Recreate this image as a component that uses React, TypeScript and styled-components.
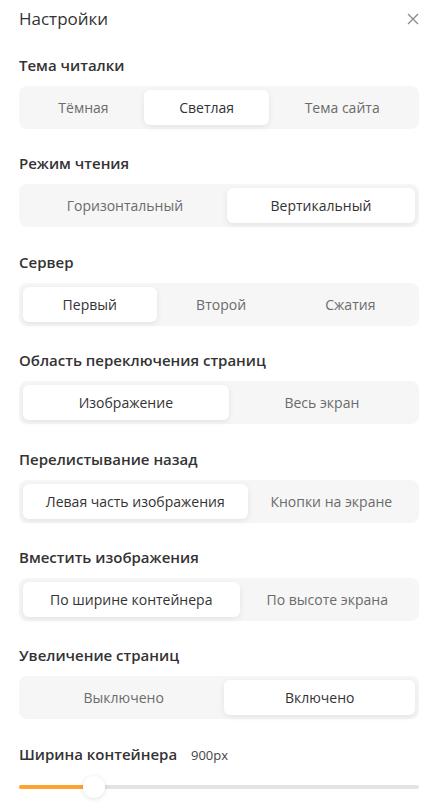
import React, { useState } from 'react';
import styled, { createGlobalStyle } from 'styled-components';

const GlobalStyle = createGlobalStyle`
  html, body {
    margin: 0;
    padding: 0;
    background: #ffffff;
    font-family: "Open Sans", "Noto Sans", sans-serif;
  }
`;

type Group = { title: string; options: string[]; active: number };

const groups: Group[] = [
  { title: 'Тема читалки', options: ['Тёмная', 'Светлая', 'Тема сайта'], active: 1 },
  { title: 'Режим чтения', options: ['Горизонтальный', 'Вертикальный'], active: 1 },
  { title: 'Сервер', options: ['Первый', 'Второй', 'Сжатия'], active: 0 },
  { title: 'Область переключения страниц', options: ['Изображение', 'Весь экран'], active: 0 },
  { title: 'Перелистывание назад', options: ['Левая часть изображения', 'Кнопки на экране'], active: 0 },
  { title: 'Вместить изображения', options: ['По ширине контейнера', 'По высоте экрана'], active: 0 },
  { title: 'Увеличение страниц', options: ['Выключено', 'Включено'], active: 1 },
];

function App() {
  const [state, setState] = useState(groups.map((g) => g.active));
  const width = 900;
  const min = 600;
  const max = 2200;
  const pct = ((width - min) / (max - min)) * 100;

  return (
    <>
      <GlobalStyle />
      <Panel>
        <Header>
          <Title>Настройки</Title>
          <CloseButton aria-label="close">
            <svg width="12" height="12" viewBox="0 0 12 12">
              <path d="M1 1L11 11M11 1L1 11" stroke="#8a8a8a" strokeWidth="1.3" fill="none" />
            </svg>
          </CloseButton>
        </Header>

        {groups.map((g, gi) => (
          <Section key={g.title}>
            <Heading>{g.title}</Heading>
            <Segmented>
              {g.options.map((o, oi) => (
                <Segment
                  key={o}
                  $active={state[gi] === oi}
                  onClick={() => setState(state.map((v, i) => (i === gi ? oi : v)))}
                >
                  {o}
                </Segment>
              ))}
            </Segmented>
          </Section>
        ))}

        <Section>
          <Heading>
            Ширина контейнера <Value>{width}px</Value>
          </Heading>
          <Slider>
            <Track />
            <Fill style={{ width: pct + '%' }} />
            <Thumb style={{ left: pct + '%' }} />
          </Slider>
        </Section>
      </Panel>
    </>
  );
}

const Panel = styled.div`
  padding: 0 8px 0 19px;
  width: 400px;
`;

const Header = styled.div`
  display: flex;
  align-items: center;
  justify-content: space-between;
  height: 38px;
  margin-bottom: 16px;
`;

const Title = styled.div`
  font-size: 17px;
  font-weight: 400;
  color: #333;
  line-height: 22px;
`;

const CloseButton = styled.button`
  border: none;
  background: none;
  padding: 0;
  width: 12px;
  height: 12px;
  display: flex;
  cursor: pointer;
`;

const Section = styled.div`
  margin-bottom: 23.4px;
`;

const Heading = styled.div`
  font-size: 15px;
  font-weight: 600;
  color: #333;
  line-height: 22px;
  margin-bottom: 10px;
`;

const Value = styled.span`
  font-size: 13px;
  font-weight: 400;
  color: #444;
  margin-left: 10px;
`;

const Segmented = styled.div`
  display: flex;
  background: #f6f6f6;
  border-radius: 8px;
  padding: 4px;
  height: 35px;
`;

const Segment = styled.div<{ $active: boolean }>`
  flex: 1 1 auto;
  display: flex;
  align-items: center;
  justify-content: center;
  font-size: 14px;
  white-space: nowrap;
  border-radius: 6px;
  cursor: pointer;
  color: ${(p) => (p.$active ? '#333' : '#6b6b6b')};
  background: ${(p) => (p.$active ? '#ffffff' : 'transparent')};
  box-shadow: ${(p) => (p.$active ? '0 2px 6px rgba(0, 0, 0, 0.08)' : 'none')};
`;

const Slider = styled.div`
  position: relative;
  height: 22px;
  margin-top: 8px;
`;

const Track = styled.div`
  position: absolute;
  left: 0;
  right: 0;
  top: 9px;
  height: 4px;
  border-radius: 2px;
  background: #e3e3e3;
`;

const Fill = styled.div`
  position: absolute;
  left: 0;
  top: 9px;
  height: 4px;
  border-radius: 2px;
  background: #ffa230;
`;

const Thumb = styled.div`
  position: absolute;
  top: 0;
  width: 22px;
  height: 22px;
  margin-left: -11px;
  border-radius: 50%;
  background: #fff;
  box-shadow: 0 1px 5px rgba(0, 0, 0, 0.12);
`;

export default App;
